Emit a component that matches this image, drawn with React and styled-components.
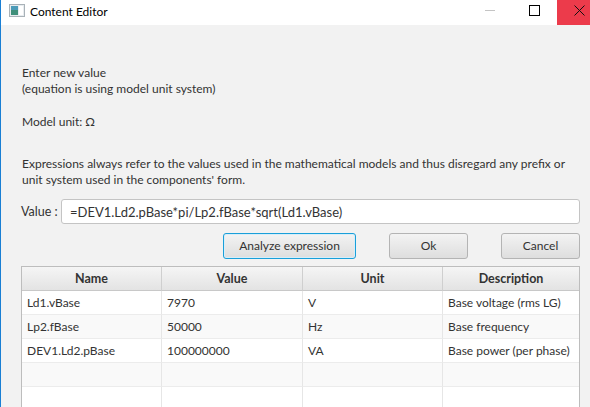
import React from 'react'
import styled, { createGlobalStyle } from 'styled-components'

const GlobalStyle = createGlobalStyle`
  html, body { margin: 0; padding: 0; overflow: hidden; }
  body { font-family: Lato, "Open Sans", sans-serif; }
`

const Window = styled.div`
  width: 590px;
  height: 407px;
  box-sizing: border-box;
  border-left: 1px solid #1a7fd4;
  background: #f2f2f2;
  display: flex;
  flex-direction: column;
  overflow: hidden;
`

const TitleBar = styled.div`
  height: 25px;
  flex: none;
  background: #fff;
  display: flex;
  align-items: center;
  position: relative;
`

const AppIcon = styled.svg`
  margin-left: 8px;
  margin-top: -4px;
  width: 16px;
  height: 13px;
`

const Title = styled.span`
  margin-left: 5px;
  margin-top: -3px;
  font-size: 12px;
  color: #000;
`

const Controls = styled.div`
  margin-left: auto;
  display: flex;
  height: 100%;
  margin-right: -12px;
`

const Ctrl = styled.div`
  width: 45px;
  height: 100%;
  display: flex;
  align-items: center;
  justify-content: center;
  background: ${p => (p.$close ? '#ec3b4b' : 'transparent')};
  padding-bottom: 5px;
  box-sizing: border-box;
`

const Body = styled.div`
  flex: 1;
  padding: 40px 10px 0 20px;
  display: flex;
  flex-direction: column;
  color: #333;
  font-size: 12px;
  line-height: 16px;
`

const Para = styled.div`
  margin-top: ${p => p.$mt || 0}px;
  padding-left: 1px;
  white-space: nowrap;
`

const ValueRow = styled.div`
  margin-top: 11px;
  display: flex;
  align-items: center;
  gap: 4px;
`

const Label = styled.span`
  width: 36px;
  white-space: nowrap;
  font-size: 12.5px;
`

const Input = styled.div`
  flex: 1;
  height: 25px;
  box-sizing: border-box;
  background: #fff;
  border: 1px solid #c4c4c4;
  border-radius: 3px;
  padding: 0 8px;
  display: flex;
  align-items: center;
  font-size: 13px;
`

const ButtonRow = styled.div`
  margin-top: 9px;
  display: flex;
  justify-content: flex-end;
  gap: 33px;
`

const Button = styled.div`
  width: ${p => p.$w}px;
  height: 26px;
  box-sizing: border-box;
  border-radius: 3px;
  border: 1px solid ${p => (p.$focus ? '#1a9fd9' : '#b4b4b4')};
  box-shadow: ${p => (p.$focus ? 'inset 0 0 0 1px #d7eef9' : 'none')};
  background: linear-gradient(#f3f3f3, #dedede);
  display: flex;
  align-items: center;
  justify-content: center;
  color: #333;
  font-size: 12px;
`

const Table = styled.div`
  margin-top: 7px;
  flex: 1;
  border: 1px solid #bdbdbd;
  border-bottom: none;
  background: #fff;
  display: grid;
  grid-template-columns: 140px 141px 140px 1fr;
  grid-auto-rows: 24px;
  align-content: start;
`

const Head = styled.div`
  height: 24px;
  display: flex;
  align-items: center;
  justify-content: center;
  font-weight: 700;
  font-size: 12.5px;
  color: #333;
  background: linear-gradient(#f5f5f5, #e3e3e3);
  border-bottom: 1px solid #c8c8c8;
  border-right: ${p => (p.$last ? 'none' : '1px solid #cfcfcf')};
  box-sizing: border-box;
`

const Cell = styled.div`
  display: flex;
  align-items: center;
  padding-left: 5px;
  background: ${p => (p.$odd ? '#f9f9f9' : '#fff')};
  border-right: ${p => (p.$last ? 'none' : '1px solid #e6e6e6')};
  border-bottom: 1px solid #ececec;
  box-sizing: border-box;
  white-space: nowrap;
  overflow: hidden;
  font-size: 12px;
`

const columns = ['Name', 'Value', 'Unit', 'Description']
const rows = [
  ['Ld1.vBase', '7970', 'V', 'Base voltage (rms LG)'],
  ['Lp2.fBase', '50000', 'Hz', 'Base frequency'],
  ['DEV1.Ld2.pBase', '100000000', 'VA', 'Base power (per phase)'],
  ['', '', '', ''],
  ['', '', '', ''],
]

export default function App() {
  return (
    <Window>
      <GlobalStyle />
      <TitleBar>
        <AppIcon viewBox="0 0 16 13">
          <rect x="0.5" y="0.5" width="15" height="12" fill="#e8ecef" stroke="#a9b2b8" />
          <rect x="2" y="2" width="7" height="9" fill="#3f8f7a" />
          <rect x="2" y="2" width="7" height="4" fill="#4c9bb8" />
          <rect x="10" y="2" width="4" height="9" fill="#ffffff" />
        </AppIcon>
        <Title>Content Editor</Title>
        <Controls>
          <Ctrl>
            <svg width="10" height="10" viewBox="0 0 10 10">
              <line x1="0" y1="5.5" x2="10" y2="5.5" stroke="#c4c4c4" />
            </svg>
          </Ctrl>
          <Ctrl>
            <svg width="11" height="11" viewBox="0 0 11 11">
              <rect x="0.5" y="0.5" width="10" height="10" fill="none" stroke="#000" />
            </svg>
          </Ctrl>
          <Ctrl $close>
            <svg width="11" height="11" viewBox="0 0 11 11">
              <path d="M0.5 0.5 L10.5 10.5 M10.5 0.5 L0.5 10.5" stroke="#111" />
            </svg>
          </Ctrl>
        </Controls>
      </TitleBar>
      <Body>
        <Para>
          Enter new value
          <br />
          (equation is using model unit system)
        </Para>
        <Para $mt={17}>Model unit: Ω</Para>
        <Para $mt={26}>
          Expressions always refer to the values used in the mathematical models and thus disregard any prefix or
          <br />
          unit system used in the components' form.
        </Para>
        <ValueRow>
          <Label>Value :</Label>
          <Input>=DEV1.Ld2.pBase*pi/Lp2.fBase*sqrt(Ld1.vBase)</Input>
        </ValueRow>
        <ButtonRow>
          <Button $w={133} $focus>Analyze expression</Button>
          <Button $w={79}>Ok</Button>
          <Button $w={79}>Cancel</Button>
        </ButtonRow>
        <Table>
          {columns.map((c, i) => (
            <Head key={c} $last={i === columns.length - 1}>{c}</Head>
          ))}
          {rows.map((r, ri) =>
            r.map((v, ci) => (
              <Cell key={ri + '-' + ci} $odd={ri % 2 === 1} $last={ci === r.length - 1}>
                {v}
              </Cell>
            ))
          )}
        </Table>
      </Body>
    </Window>
  )
}
